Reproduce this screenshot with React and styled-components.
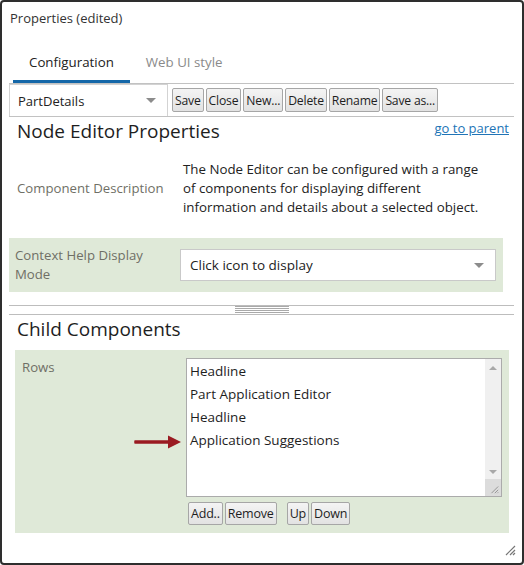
import React from 'react'
import styled, { createGlobalStyle } from 'styled-components'

const GlobalStyle = createGlobalStyle`
  html, body {
    margin: 0;
    padding: 0;
    background: #fff;
  }
  body {
    font-family: "Open Sans", "Noto Sans", sans-serif;
    color: #222;
  }
  * {
    box-sizing: border-box;
  }
`

const Window = styled.div`
  position: relative;
  width: 524px;
  height: 565px;
  border: 2px solid #2e2e2e;
  border-radius: 4px;
  padding: 0 8px 0 7px;
  display: flex;
  flex-direction: column;
  overflow: hidden;
`

const Title = styled.div`
  height: 33px;
  line-height: 33px;
  padding-left: 1px;
  font-size: 13px;
  color: #333;
`

const TabBar = styled.div`
  display: flex;
  padding-left: 4px;
  border-bottom: 1px solid #c2c2c2;
`

const Tab = styled.div`
  padding: 10px 16px 0 16px;
  line-height: 35px;
  font-size: 13.3px;
  color: ${p => (p.$active ? '#222' : '#8a8a8a')};
  border-bottom: 3px solid ${p => (p.$active ? '#1467a8' : 'transparent')};
`

const Toolbar = styled.div`
  display: flex;
  align-items: center;
  height: 33px;
  border-bottom: 1px solid #c2c2c2;
`

const Dropdown = styled.div`
  width: 159px;
  height: 32px;
  border: 1px solid #d3d3d3;
  border-bottom: none;
  display: flex;
  align-items: center;
  justify-content: space-between;
  padding: 0 11px 0 8px;
  font-size: 13px;
  margin-right: 4px;
  align-self: flex-start;
`

const Caret = styled.span`
  width: 0;
  height: 0;
  border-left: 5px solid transparent;
  border-right: 5px solid transparent;
  border-top: 5px solid #8c8c8c;
`

const Buttons = styled.div`
  display: flex;
  gap: ${p => p.$gap || 2}px;
`

const Button = styled.button`
  height: ${p => p.$h || 24}px;
  padding: 0 2px;
  margin-left: ${p => p.$ml || 0}px;
  font-family: "Open Sans", "Noto Sans", sans-serif;
  font-size: ${p => p.$fs || 12.5}px;
  color: #1e1e1e;
  background: linear-gradient(#f4f4f4, #e2e2e2);
  border: 1px solid #a6a6a6;
  border-radius: 2px;
  letter-spacing: -0.2px;
`

const HeadingRow = styled.div`
  display: flex;
  justify-content: space-between;
  align-items: flex-start;
`

const Heading = styled.div`
  font-size: 19px;
  line-height: 28px;
  padding-left: 8px;
  color: #1e1e1e;
`

const ParentLink = styled.a`
  font-size: 13px;
  line-height: 18px;
  margin-top: 2px;
  padding-right: 5px;
  color: #2174b6;
  text-decoration: underline;
`

const DescRow = styled.div`
  display: grid;
  grid-template-columns: 174px 1fr;
  align-items: center;
  margin-top: 15px;
`

const Label = styled.div`
  font-size: 13.2px;
  line-height: 19px;
  padding-left: ${p => p.$pl || 0}px;
  max-width: ${p => p.$max || 'none'};
  color: #6f6f66;
`

const DescText = styled.div`
  width: 300px;
  font-size: 13.3px;
  line-height: 19px;
  color: #222;
`

const GreenRow = styled.div`
  display: grid;
  grid-template-columns: 165px 1fr;
  align-items: center;
  margin: 21px 11px 0 0;
  padding: 8px 7px 8px 6px;
  background: #dfe9d8;
`

const Select = styled.div`
  height: 32px;
  background: #fff;
  border: 1px solid #c9c9c9;
  display: flex;
  align-items: center;
  justify-content: space-between;
  padding: 0 11px 0 9px;
  font-size: 13.5px;
  color: #222;
`

const Splitter = styled.div`
  margin-top: 13px;
  height: 10px;
  border-top: 1px solid #bdbdbd;
  border-bottom: 1px solid #bdbdbd;
  display: flex;
  justify-content: center;
`

const Grip = styled.div`
  width: 54px;
  height: 8px;
  background: repeating-linear-gradient(#a9a9a9 0 1px, transparent 1px 2px);
`

const ChildBlock = styled.div`
  position: relative;
  display: grid;
  grid-template-columns: 164px 1fr;
  align-items: start;
  margin: 7px 5px 0 6px;
  padding: 8px 7px 8px 7px;
  background: #dfe9d8;
`

const ListBox = styled.div`
  display: flex;
  height: 139px;
  background: #fff;
  border: 1px solid #ababab;
`

const ListItems = styled.div`
  flex: 1;
  padding: 1px 0 0 3px;
`

const ListItem = styled.div`
  font-size: 13.5px;
  line-height: 23px;
  color: #1e1e1e;
`

const ScrollBar = styled.div`
  width: 16px;
  background: #f0f0f0;
  display: flex;
  flex-direction: column;
  align-items: center;
`

const ScrollArrow = styled.span`
  margin-top: ${p => p.$mt}px;
  width: 0;
  height: 0;
  border-left: 4px solid transparent;
  border-right: 4px solid transparent;
  ${p => (p.$up ? 'border-bottom' : 'border-top')}: 4px solid #a8a8a8;
`

const Corner = styled.div`
  margin-top: auto;
  width: 16px;
  height: 17px;
  background: #dcdcdc;
  display: flex;
  align-items: flex-end;
  justify-content: flex-end;
  padding: 0 2px 2px 0;
`

const RowButtons = styled(Buttons)`
  margin: 5px 0 0 2px;
`

const Annotation = styled.svg`
  position: absolute;
  left: 119px;
  top: 85px;
`

const ResizeGrip = styled.svg`
  position: absolute;
  right: 6px;
  bottom: 7px;
`

const Grips = ({ size, color }) => (
  <svg width={size} height={size} viewBox="0 0 12 12">
    <path d="M11 3 L3 11 M11 7 L7 11 M11 10 L10 11" stroke={color} strokeWidth="1" />
  </svg>
)

export default function App() {
  const rows = ['Headline', 'Part Application Editor', 'Headline', 'Application Suggestions']
  const tools = ['Save', 'Close', 'New...', 'Delete', 'Rename', 'Save as...']
  return (
    <>
      <GlobalStyle />
      <Window>
        <Title>Properties (edited)</Title>
        <TabBar>
          <Tab $active>Configuration</Tab>
          <Tab>Web UI style</Tab>
        </TabBar>
        <Toolbar>
          <Dropdown>
            PartDetails
            <Caret />
          </Dropdown>
          <Buttons>
            {tools.map(t => (
              <Button key={t} $fs={12.2}>{t}</Button>
            ))}
          </Buttons>
        </Toolbar>

        <HeadingRow>
          <Heading>Node Editor Properties</Heading>
          <ParentLink href="#">go to parent</ParentLink>
        </HeadingRow>

        <DescRow>
          <Label $pl={8}>Component Description</Label>
          <DescText>
            The Node Editor can be configured with a range of components for displaying different
            information and details about a selected object.
          </DescText>
        </DescRow>

        <GreenRow>
          <Label $max="150px">Context Help Display Mode</Label>
          <Select>
            Click icon to display
            <Caret />
          </Select>
        </GreenRow>

        <Splitter>
          <Grip />
        </Splitter>

        <Heading>Child Components</Heading>

        <ChildBlock>
          <Label>Rows</Label>
          <div>
            <ListBox>
              <ListItems>
                {rows.map((r, i) => (
                  <ListItem key={i}>{r}</ListItem>
                ))}
              </ListItems>
              <ScrollBar>
                <ScrollArrow $up $mt={7} />
                <ScrollArrow $mt={100} />
                <Corner>
                  <Grips size={10} color="#888" />
                </Corner>
              </ScrollBar>
            </ListBox>
            <RowButtons>
              <Button $h={23}>Add..</Button>
              <Button $h={23}>Remove</Button>
              <Button $h={23} $ml={8}>Up</Button>
              <Button $h={23}>Down</Button>
            </RowButtons>
          </div>
          <Annotation width="48" height="14" viewBox="0 0 48 14">
            <path d="M1 6 L34 6 L34 8 L1 8 Z" fill="#9a1b22" stroke="#9a1b22" strokeWidth="1.5" strokeLinejoin="round" />
            <path d="M34 0.5 L47 7 L34 13.5 Z" fill="#9a1b22" />
          </Annotation>
        </ChildBlock>

        <ResizeGrip width="12" height="12" viewBox="0 0 12 12">
          <path d="M11 2 L2 11 M11 6 L6 11 M11 9 L9 11" stroke="#777" strokeWidth="1.2" />
        </ResizeGrip>
      </Window>
    </>
  )
}
